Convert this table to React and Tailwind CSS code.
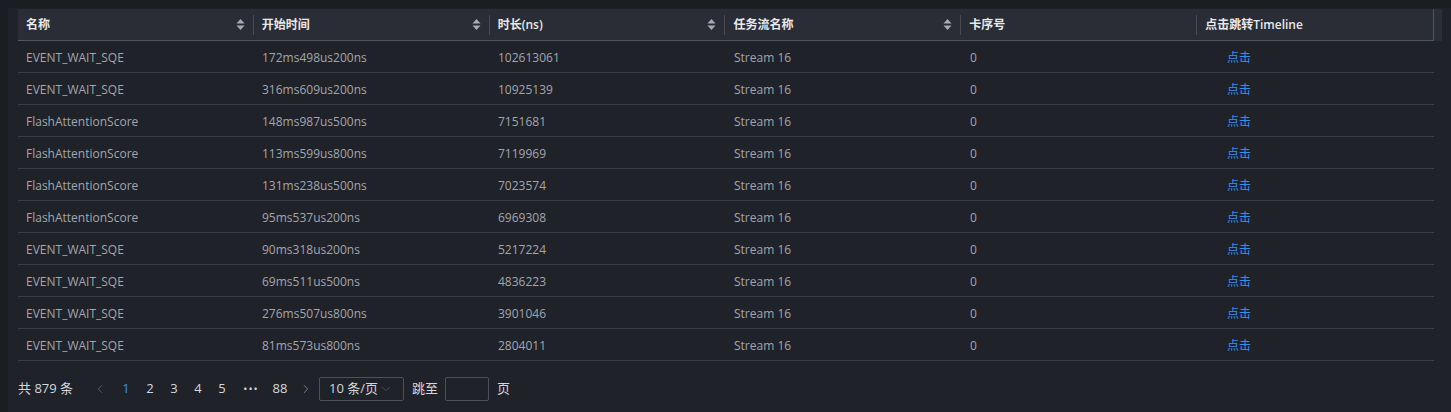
import { ChevronDown, ChevronLeft, ChevronRight } from 'lucide-react'

const columns = ['名称', '开始时间', '时长(ns)', '任务流名称', '卡序号', '点击跳转Timeline']
const sortable = [true, true, true, true, false, false]

const rows = [
  ['EVENT_WAIT_SQE', '172ms498us200ns', '102613061'],
  ['EVENT_WAIT_SQE', '316ms609us200ns', '10925139'],
  ['FlashAttentionScore', '148ms987us500ns', '7151681'],
  ['FlashAttentionScore', '113ms599us800ns', '7119969'],
  ['FlashAttentionScore', '131ms238us500ns', '7023574'],
  ['FlashAttentionScore', '95ms537us200ns', '6969308'],
  ['EVENT_WAIT_SQE', '90ms318us200ns', '5217224'],
  ['EVENT_WAIT_SQE', '69ms511us500ns', '4836223'],
  ['EVENT_WAIT_SQE', '276ms507us800ns', '3901046'],
  ['EVENT_WAIT_SQE', '81ms573us800ns', '2804011'],
]

function SortIcon() {
  return (
    <svg width="9" height="11" viewBox="0 0 9 11" className="shrink-0">
      <path d="M4.5 0 L8.5 4.5 L0.5 4.5 Z" fill="#a9acb3" />
      <path d="M4.5 11 L8.5 6.5 L0.5 6.5 Z" fill="#a9acb3" />
    </svg>
  )
}

function HeaderCell({ label, sort, last }) {
  return (
    <div className="relative flex h-full items-center pl-2 pr-[9px]">
      <span className="flex-1 truncate pt-px font-semibold text-[#e8e9eb]">{label}</span>
      {sort && <SortIcon />}
      {!last && <span className="absolute right-0 top-1/2 h-[20px] w-px -translate-y-1/2 bg-[#474b53]" />}
    </div>
  )
}

export default function App() {
  return (
    <div
      className="h-[412px] w-[1451px] overflow-hidden bg-[#1a1d22] pl-2 pt-2 text-[12px]"
      style={{ fontFamily: '"Open Sans", "Noto Sans CJK SC", sans-serif' }}
    >
      <div className="h-full bg-[#1f2229] pl-[10px] pt-px">
        <div className="flex w-[1424px]">
          <div className="grid h-[32px] w-[1416px] grid-cols-6 border-b border-r border-[#52565e] bg-[#2a2d35]">
            {columns.map((c, i) => (
              <HeaderCell key={c} label={c} sort={sortable[i]} last={i === columns.length - 1} />
            ))}
          </div>
          <div className="h-[32px] w-[8px] bg-[#2b2f37]" />
        </div>

        <div className="w-[1416px]">
          {rows.map((r, i) => (
            <div key={i} className="grid h-[32px] grid-cols-6 items-center border-b border-[#3b3e45] pt-[2px] text-[#a3a6ad]">
              <div className="pl-2">{r[0]}</div>
              <div className="pl-2">{r[1]}</div>
              <div className="pl-2">{r[2]}</div>
              <div className="pl-2">Stream 16</div>
              <div className="pl-2">0</div>
              <div className="pl-[29px]">
                <span className="cursor-pointer text-[#3a8ef0]">点击</span>
              </div>
            </div>
          ))}
        </div>

        <div className="mt-4 flex h-[24px] items-center text-[13px] text-[#d6d7da]">
          <span className="w-[72px]">共 879 条</span>
          <ChevronLeft className="ml-[3px] h-[14px] w-[14px] text-[#5d6068]" strokeWidth={1.5} />
          <div className="ml-[7px] flex items-center">
            <span className="w-[24px] text-center text-[#3a8ef0]">1</span>
            <span className="w-[24px] text-center">2</span>
            <span className="w-[24px] text-center">3</span>
            <span className="w-[24px] text-center">4</span>
            <span className="w-[24px] text-center">5</span>
            <span className="w-[34px] text-center text-[11px] tracking-[1px]">•••</span>
            <span className="w-[24px] text-center">88</span>
          </div>
          <ChevronRight className="ml-[7px] h-[14px] w-[14px] text-[#8b8e95]" strokeWidth={1.5} />
          <div className="ml-[6px] flex h-[24px] w-[85px] items-center justify-between rounded-[2px] border border-[#4c5058] pl-[9px] pr-[10px]">
            <span>10 条/页</span>
            <ChevronDown className="h-[14px] w-[14px] text-[#4c5058]" strokeWidth={1.5} />
          </div>
          <span className="ml-2">跳至</span>
          <div className="ml-[7px] h-[24px] w-[44px] rounded-[2px] border border-[#4c5058]" />
          <span className="ml-2">页</span>
        </div>
      </div>
    </div>
  )
}
